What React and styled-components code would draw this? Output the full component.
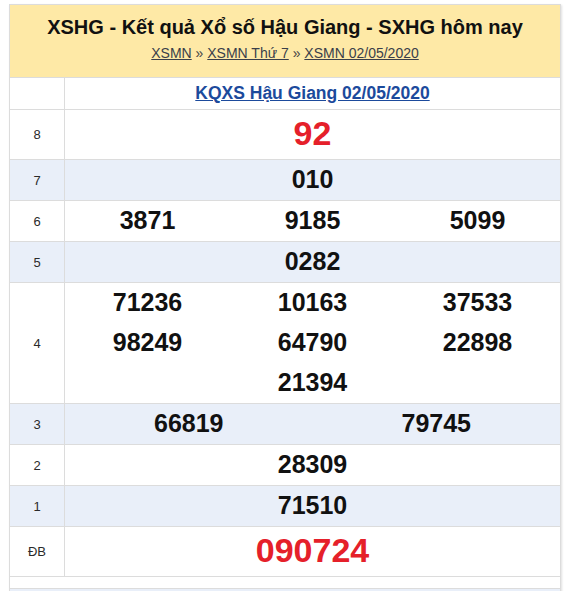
import React from "react";
import styled, { createGlobalStyle } from "styled-components";

const Global = createGlobalStyle`
  html, body { margin: 0; padding: 0; overflow: hidden; background: #fff; }
  body { font-family: "Liberation Sans", Arial, sans-serif; color: #222; }
`;

const Box = styled.div`
  margin: 4px 0 0 9px;
  width: 550px;
  border: 1px solid #dcdcdc;
  box-shadow: 1px 1px 2px rgba(0, 0, 0, 0.12);
`;

const Header = styled.div`
  background: #fee9a6;
  height: 72px;
  box-sizing: border-box;
  padding-top: 10px;
  text-align: center;
`;

const Title = styled.h1`
  margin: 0;
  font-size: 20px;
  line-height: 24px;
  font-weight: bold;
  color: #111;
`;

const Crumbs = styled.div`
  margin-top: 5px;
  font-size: 14px;
  line-height: 18px;
  color: #444;
`;

const Crumb = styled.a`
  color: #3a3f4a;
  text-decoration: underline;
`;

const Row = styled.div`
  display: grid;
  grid-template-columns: 55px 1fr;
  border-top: 1px solid #dcdcdc;
  background: ${(p) => (p.$alt ? "#e9eff9" : "#fff")};
  min-height: ${(p) => p.$h}px;
`;

const Label = styled.div`
  border-right: 1px solid #dcdcdc;
  display: flex;
  align-items: center;
  justify-content: center;
  font-size: 13px;
  color: #2a2a2a;
`;

const Cells = styled.div`
  display: grid;
  grid-template-columns: repeat(${(p) => p.$cols}, 1fr);
  grid-auto-rows: ${(p) => p.$line}px;
  align-content: center;
`;

const Num = styled.div`
  display: flex;
  align-items: center;
  justify-content: center;
  padding-bottom: 2px;
  font-weight: bold;
  font-size: ${(p) => (p.$big ? 34 : 25)}px;
  color: ${(p) => (p.$big ? "#e5202a" : "#111")};
  grid-column: ${(p) => (p.$span ? "1 / -1" : "auto")};
`;

const Head = styled.div`
  display: flex;
  align-items: center;
  justify-content: center;
`;

const HeadLink = styled.a`
  font-size: 17.5px;
  font-weight: bold;
  color: #1c4a9c;
  text-decoration: underline;
`;

const Spacer = styled.div`
  height: 11px;
  border-top: 1px solid #dcdcdc;
`;

const Footer = styled.div`
  height: 30px;
  background: #e9eff9;
  border-top: 1px solid #dcdcdc;
`;

const prizes = [
  { label: "8", nums: ["92"], cols: 1, big: true, h: 49 },
  { label: "7", nums: ["010"], cols: 1, h: 40, alt: true },
  { label: "6", nums: ["3871", "9185", "5099"], cols: 3, h: 40 },
  { label: "5", nums: ["0282"], cols: 1, h: 40, alt: true },
  {
    label: "4",
    nums: ["71236", "10163", "37533", "98249", "64790", "22898", "21394"],
    cols: 3,
    h: 119,
  },
  { label: "3", nums: ["66819", "79745"], cols: 2, h: 40, alt: true },
  { label: "2", nums: ["28309"], cols: 1, h: 40 },
  { label: "1", nums: ["71510"], cols: 1, h: 40, alt: true },
  { label: "ĐB", nums: ["090724"], cols: 1, big: true, h: 49 },
];

export default function App() {
  return (
    <>
      <Global />
      <Box>
        <Header>
          <Title>XSHG - Kết quả Xổ số Hậu Giang - SXHG hôm nay</Title>
          <Crumbs>
            <Crumb href="#">XSMN</Crumb> » <Crumb href="#">XSMN Thứ 7</Crumb> »{" "}
            <Crumb href="#">XSMN 02/05/2020</Crumb>
          </Crumbs>
        </Header>
        <Row $h={31}>
          <Label />
          <Head>
            <HeadLink href="#">KQXS Hậu Giang 02/05/2020</HeadLink>
          </Head>
        </Row>
        {prizes.map((p) => (
          <Row key={p.label} $alt={p.alt} $h={p.h}>
            <Label>{p.label}</Label>
            <Cells $cols={p.cols} $line={p.h > 100 ? 40 : p.h}>
              {p.nums.map((n, i) => (
                <Num
                  key={i}
                  $big={p.big}
                  $span={p.cols === 3 && p.nums.length === 7 && i === 6}
                >
                  {n}
                </Num>
              ))}
            </Cells>
          </Row>
        ))}
        <Spacer />
        <Footer />
      </Box>
    </>
  );
}
